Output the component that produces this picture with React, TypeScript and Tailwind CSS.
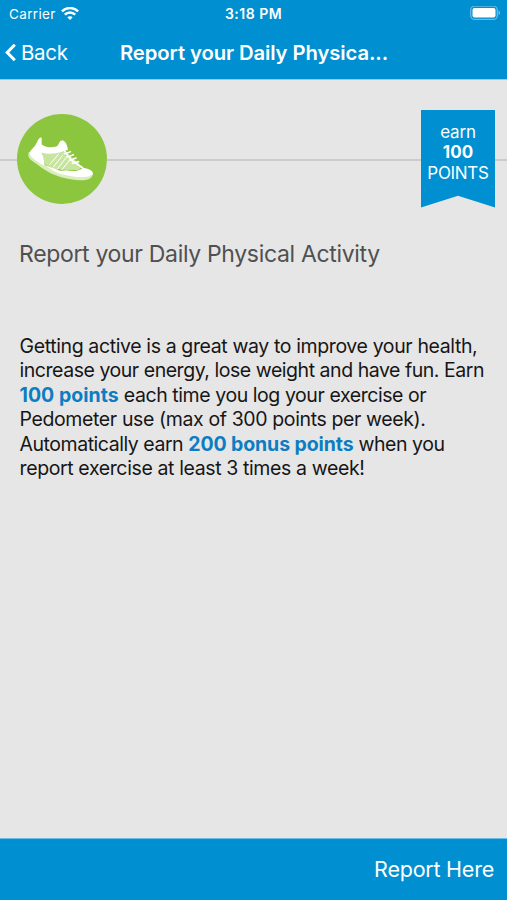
const WifiIcon = () => (
    <svg
        className="h-[14px] w-[18px]"
        viewBox="0 0 18 14"
        fill="none"
        stroke="white"
        strokeWidth="2.5"
    >
        <path d="M0.9 4.4C5.4 -0.1 12.6 -0.1 17.1 4.4" />
        <path d="M3.8 7.7C6.7 4.7 11.3 4.7 14.2 7.7" />
        <path
            d="M9 12.9L6.3 10.2C7.8 8.8 10.2 8.8 11.7 10.2Z"
            fill="white"
            stroke="none"
        />
    </svg>
);

const BatteryIcon = () => (
    <svg className="h-[15px] w-[31px]" viewBox="0 0 31 15" fill="none">
        <rect
            x="0.7"
            y="0.2"
            width="26.6"
            height="13.2"
            rx="4"
            stroke="white"
            strokeOpacity="0.4"
            strokeWidth="1.3"
        />
        <rect x="2.5" y="2" width="23" height="9.6" rx="2" fill="white" />
        <path
            d="M28.6 4.5C30.4 5.1 30.4 8.5 28.6 9.1Z"
            fill="white"
            fillOpacity="0.5"
        />
    </svg>
);

const ShoeIcon = () => (
    <svg className="size-[90px]" viewBox="21 25 270 270" fill="none">
        <circle cx="156" cy="160" r="135" fill="#8cc63f" />
        <path
            d="M57 138C52 150 56 157 67 166C88 181 105 194 122 203C145 214 178 222 210 224C236 225 248 218 249 203L222 207L150 200L100 177Z"
            fill="#d9edbd"
        />
        <path
            d="M96 140L132 141L163 132L216 183L205 194L135 191L104 176Z"
            fill="#c8e59e"
        />
        <path
            d="M93 95C84 98 82 110 76 119C69 129 58 136 59 145C66 160 87 171 104 181C102 164 101 153 95 141C115 147 143 144 161 136L174 133C172 121 169 109 158 104C150 104 147 113 144 119C134 129 107 125 96 117C93 109 98 101 93 95Z"
            fill="white"
        />
        <path
            d="M104 178C122 192 142 204 165 208C194 215 235 220 249 205C250 195 239 190 219 186C208 198 187 197 169 194C155 197 143 194 135 189Z"
            fill="white"
        />
        <path
            d="M146 145L119 177M158 149L130 184M169 155L141 191M179 164L155 193"
            stroke="white"
            strokeWidth="3"
        />
        <path
            d="M161 132L185 164L219 187"
            stroke="white"
            strokeWidth="5"
        />
        <path
            d="M163 144L181 138M170 154L190 147M178 164L198 157M187 173L206 168"
            stroke="white"
            strokeWidth="5"
            strokeLinecap="round"
        />
        <path
            d="M167 139L179 135M175 149L187 144M184 158L195 153"
            stroke="#8cc63f"
            strokeWidth="2"
        />
    </svg>
);

const Header = () => (
    <header className="h-[80px] border-b border-[#8fcdec] bg-[#008fd1] text-white">
        <div className="grid h-[27px] grid-cols-3 items-center pr-[6px] pl-[9px] text-[13.5px]">
            <div className="flex items-center gap-[5px]">
                <span className="pt-[2px] tracking-[0.35px]">Carrier</span>
                <WifiIcon />
            </div>
            <span className="-ml-[3px] text-center text-[14px] leading-[20px] font-semibold tracking-[0.5px]">
                3:18 PM
            </span>
            <div className="flex justify-end">
                <BatteryIcon />
            </div>
        </div>
        <div className="grid h-[52px] grid-cols-[120px_268px_1fr] items-center">
            <button className="flex items-center gap-[5px] pl-[5px] text-left text-[20.5px] tracking-[-0.3px]">
                <svg
                    className="h-[18px] w-[11px]"
                    viewBox="0 0 11 18"
                    fill="none"
                    stroke="white"
                    strokeWidth="3"
                >
                    <path d="M9.8 0.7L2.2 8.5L9.8 16.3" />
                </svg>
                Back
            </button>
            <h1 className="text-[20.3px] font-semibold tracking-[-0.1px] whitespace-nowrap">
                Report your Daily Physica...
            </h1>
        </div>
    </header>
);

const PointsRibbon = () => (
    <div className="h-[98px] w-[74px] bg-[#008fd1] pt-[12px] text-center text-[17px] leading-[20.5px] text-white [clip-path:polygon(0_0,100%_0,100%_100%,50%_88%,0_100%)]">
        <p className="tracking-[-0.2px]">earn</p>
        <p className="font-bold">100</p>
        <p className="tracking-[-0.3px]">POINTS</p>
    </div>
);

export default function App() {
    return (
        <div className="flex h-[900px] w-[507px] flex-col overflow-hidden bg-[#e6e6e6] font-['Inter','Liberation_Sans',sans-serif]">
            <Header />
            <main className="flex-1">
                <div className="mt-[28.5px] flex h-[100px] items-center">
                    <div className="mt-[2px] h-[2px] w-[17px] bg-[#cbcbcb]" />
                    <ShoeIcon />
                    <div className="mt-[2px] h-[2px] flex-1 bg-[#cbcbcb]" />
                    <PointsRibbon />
                    <div className="mt-[2px] h-[2px] w-[12px] bg-[#cbcbcb]" />
                </div>
                <h2 className="mt-[29px] pl-[19px] text-[23px] leading-[32px] tracking-[-0.33px] text-[#505050]">
                    Report your Daily Physical Activity
                </h2>
                <p className="mt-[64.5px] pl-[19.5px] text-[19.5px] leading-[24.4px] tracking-[-0.38px] whitespace-nowrap text-[#161616]">
                    Getting active is a great way to improve your health,
                    <br />
                    <span className="tracking-[-0.46px]">
                        increase your energy, lose weight and have fun. Earn
                    </span>
                    <br />
                    <b className="font-bold tracking-[0.03px] text-[#0c7dc2]">
                        100 points
                    </b>{" "}
                    <span className="tracking-[-0.43px]">
                        each time you log your exercise or
                    </span>
                    <br />
                    Pedometer use (max of 300 points per week).
                    <br />
                    <span className="tracking-[-0.46px]">
                        Automatically earn{" "}
                        <b className="font-bold tracking-[-0.1px] text-[#0c7dc2]">
                            200 bonus points
                        </b>{" "}
                        when you
                    </span>
                    <br />
                    report exercise at least 3 times a week!
                </p>
            </main>
            <footer className="flex h-[62px] items-center justify-end border-t border-[#6dbde4] bg-[#008fd1] pr-[13px] text-[21.5px] tracking-[-0.23px] text-white">
                <button>Report Here</button>
            </footer>
        </div>
    );
}
